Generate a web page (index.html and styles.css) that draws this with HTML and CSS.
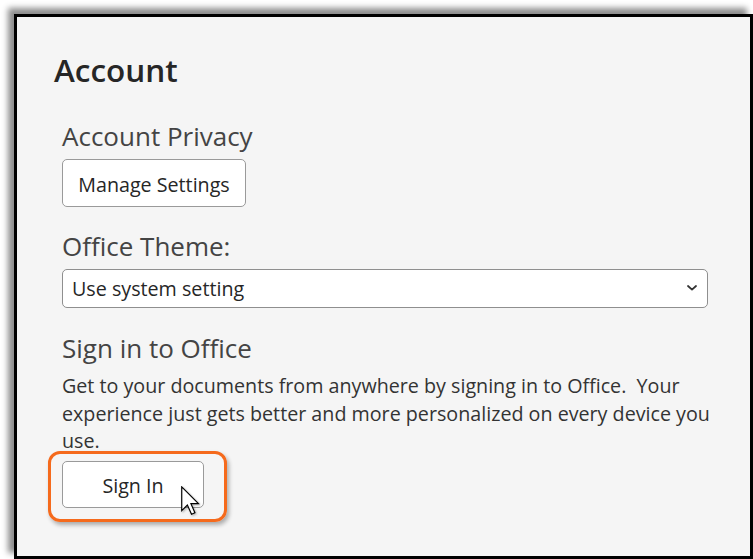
FILE: index.html
```html
<!DOCTYPE html>
<html lang="en">
<head>
<meta charset="utf-8">
<title>Account</title>
<link rel="stylesheet" href="styles.css">
</head>
<body>
<div class="frame">
  <h1 class="title">Account</h1>
  <section class="section">
    <h2 class="subhead privacy-head">Account Privacy</h2>
    <button class="btn manage-btn" type="button">Manage Settings</button>

    <h2 class="subhead theme-head">Office Theme:</h2>
    <div class="select">
      <span class="select-value">Use system setting</span>
      <svg class="chevron" width="10" height="6" viewBox="0 0 10 6" aria-hidden="true">
        <polyline points="1,1 5,4.6 9,1" fill="none" stroke="#333" stroke-width="1.8" stroke-linecap="round" stroke-linejoin="round"/>
      </svg>
    </div>

    <h2 class="subhead signin-head">Sign in to Office</h2>
    <p class="desc">Get to your documents from anywhere by signing in to Office.&nbsp; Your experience just gets better and more personalized on every device you use.</p>

    <div class="signin-wrap">
      <button class="btn signin-btn" type="button">Sign In</button>
      <span class="highlight"></span>
      <svg class="cursor" width="20" height="30" viewBox="0 0 13.5 20" aria-hidden="true">
        <path d="M0.5 0.5 L0.5 16.5 L4.3 12.7 L7.1 18.9 L9.4 17.9 L6.7 11.8 L11.8 11.8 Z" fill="#fff" stroke="#000" stroke-width="0.8" stroke-linejoin="miter"/>
      </svg>
    </div>
  </section>
</div>
</body>
</html>
```

FILE: styles.css
```css
html, body {
  margin: 0;
  padding: 0;
  background: #ffffff;
}

body {
  font-family: "Open Sans", "Noto Sans", "Liberation Sans", sans-serif;
  color: #333333;
}

.frame {
  box-sizing: border-box;
  margin: 14px 0 0 14px;
  width: 739px;
  height: 545px;
  border: 3px solid #000000;
  background: #f5f5f5;
  box-shadow: -6px -6px 6px rgba(0, 0, 0, 0.45);
  padding: 33px 28px 0 37px;
  overflow: hidden;
}

.title {
  margin: 0;
  font-size: 31.5px;
  line-height: 40px;
  font-weight: 600;
  color: #262626;
}

.section {
  margin-left: 8px;
}

.subhead {
  margin: 0;
  font-size: 26px;
  line-height: 32px;
  font-weight: 500;
  color: #444444;
}

.privacy-head {
  margin-top: 30px;
}

.theme-head {
  margin-top: 23px;
}

.signin-head {
  margin-top: 24px;
}

.btn {
  display: block;
  box-sizing: border-box;
  height: 48px;
  padding: 3px 0 0;
  border: 1px solid #9a9a9a;
  border-radius: 5px;
  background: #ffffff;
  font-family: inherit;
  font-size: 19.7px;
  line-height: 42px;
  color: #262626;
  text-align: center;
}

.manage-btn {
  margin-top: 7px;
  width: 184px;
}

.select {
  box-sizing: border-box;
  margin-top: 7px;
  width: 646px;
  height: 39px;
  border: 1px solid #8f8f8f;
  border-radius: 5px;
  background: #ffffff;
  display: flex;
  align-items: center;
  justify-content: space-between;
  padding: 1px 10px 0 9px;
}

.select-value {
  font-size: 19.7px;
  line-height: 36px;
  color: #262626;
}

.chevron {
  display: block;
  margin-top: -2px;
}

.desc {
  margin: 8px 0 0;
  width: 660px;
  font-size: 19.7px;
  line-height: 27.5px;
  color: #333333;
}

.signin-wrap {
  position: relative;
  margin-top: 6px;
  width: 142px;
}

.signin-btn {
  width: 142px;
  height: 47px;
}

.highlight {
  position: absolute;
  left: -14px;
  top: -10px;
  width: 179px;
  height: 71px;
  box-sizing: border-box;
  border: 3px solid #f56a1c;
  border-radius: 12px;
  box-shadow: 2px 3px 4px rgba(0, 0, 0, 0.3);
  pointer-events: none;
}

.cursor {
  position: absolute;
  left: 119px;
  top: 25px;
  filter: drop-shadow(1px 1px 1px rgba(0, 0, 0, 0.3));
}
```
